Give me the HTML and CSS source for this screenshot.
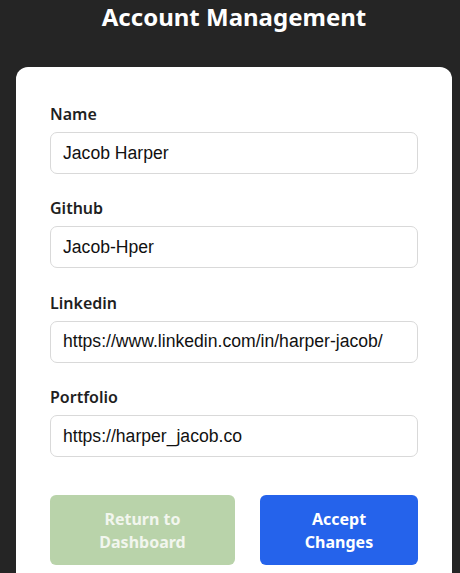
FILE: index.html
```html
<!DOCTYPE html>
<html lang="en">
<head>
<meta charset="utf-8">
<title>Account Management</title>
<link rel="stylesheet" href="styles.css">
</head>
<body>
<h1 class="title">Account Management</h1>
<main class="card">
  <div class="field">
    <label class="label" for="name">Name</label>
    <input class="input" id="name" type="text" value="Jacob Harper">
  </div>
  <div class="field">
    <label class="label" for="github">Github</label>
    <input class="input" id="github" type="text" value="Jacob-Hper">
  </div>
  <div class="field">
    <label class="label" for="linkedin">Linkedin</label>
    <input class="input" id="linkedin" type="text" value="https://www.linkedin.com/in/harper-jacob/">
  </div>
  <div class="field">
    <label class="label" for="portfolio">Portfolio</label>
    <input class="input" id="portfolio" type="text" value="https://harper_jacob.co">
  </div>
  <div class="actions">
    <button class="btn btn-return" type="button">Return to<br>Dashboard</button>
    <button class="btn btn-accept" type="button">Accept<br>Changes</button>
  </div>
</main>
</body>
</html>
```

FILE: styles.css
```css
html, body {
  margin: 0;
  padding: 0;
  background: #252525;
  height: 100%;
  overflow: hidden;
}
body {
  font-family: "Noto Sans", "Open Sans", sans-serif;
}
.title {
  margin: 0;
  height: 67px;
  padding: 0 0 0 8px;
  text-align: center;
  color: #ffffff;
  font-size: 24px;
  font-weight: 700;
  line-height: 33px;
  box-sizing: border-box;
}
.card {
  margin: 0 8px 0 16px;
  background: #ffffff;
  border-radius: 12px;
  padding: 35px 34px 40px;
  min-height: 600px;
  box-sizing: border-box;
}
.field {
  display: flex;
  flex-direction: column;
  margin-bottom: 22.4px;
}
.label {
  font-size: 16px;
  font-weight: 600;
  color: #1f1f1f;
  line-height: 24px;
  margin-bottom: 6px;
}
.input {
  height: 42px;
  box-sizing: border-box;
  border: 1px solid #d9d9d9;
  border-radius: 7px;
  padding: 0 12px;
  font-family: "Liberation Sans", Arial, sans-serif;
  font-size: 17.6px;
  color: #111111;
  background: #ffffff;
  outline: none;
}
.actions {
  display: flex;
  justify-content: space-between;
  margin-top: 38px;
}
.btn {
  height: 70px;
  border: none;
  border-radius: 6px;
  font-family: "Noto Sans", "Open Sans", sans-serif;
  font-size: 16px;
  font-weight: 700;
  line-height: 23px;
  color: #ffffff;
  padding: 2px 0 0;
}
.btn-return {
  width: 185px;
  background: #b9d3aa;
  color: #f2f6ee;
}
.btn-accept {
  width: 158px;
  background: #2563eb;
}
```
